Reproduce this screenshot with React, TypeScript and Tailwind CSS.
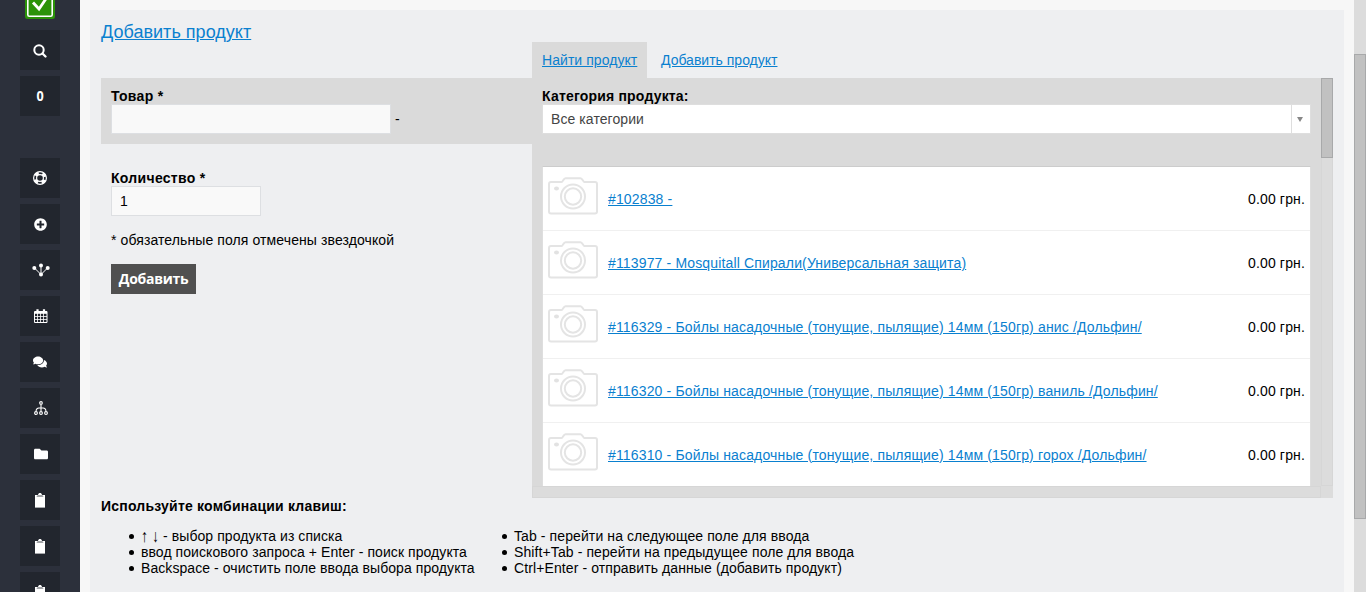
import type { ReactNode } from 'react';
import { FaPlusCircle, FaFolder, FaComments } from 'react-icons/fa';

const products = [
  '#102838 -',
  '#113977 - Mosquitall Спирали(Универсальная защита)',
  '#116329 - Бойлы насадочные (тонущие, пылящие) 14мм (150гр) анис /Дольфин/',
  '#116320 - Бойлы насадочные (тонущие, пылящие) 14мм (150гр) ваниль /Дольфин/',
  '#116310 - Бойлы насадочные (тонущие, пылящие) 14мм (150гр) горох /Дольфин/',
];

function Search() {
  return (
    <svg width="14" height="14" viewBox="0 0 14 14" fill="none" stroke="currentColor" strokeWidth="2">
      <circle cx="6" cy="6" r="4.7" />
      <path d="M9.5 9.5l3 3" strokeLinecap="round" strokeWidth="2.3" />
    </svg>
  );
}

function LifeRing() {
  return (
    <svg width="14" height="14" viewBox="0 0 14 14" fill="none" stroke="currentColor">
      <circle cx="7" cy="7" r="6.4" strokeWidth="1.2" />
      <circle cx="7" cy="7" r="3.4" strokeWidth="1.2" />
      <circle cx="7" cy="7" r="5" strokeWidth="3" strokeDasharray="3.93 3.93" strokeDashoffset="-1.96" />
    </svg>
  );
}

function Hub() {
  return (
    <svg width="18" height="14" viewBox="0 0 18 14" fill="currentColor" stroke="currentColor">
      <path d="M9 11.5V2.5M9 11.5L2.5 5M9 11.5L15.5 5" />
      <g stroke="none">
        <circle cx="9" cy="2.5" r="2" />
        <circle cx="2.3" cy="4.9" r="2" />
        <circle cx="15.7" cy="4.9" r="2" />
        <circle cx="9" cy="11.5" r="2" />
      </g>
    </svg>
  );
}

function Calendar() {
  return (
    <svg width="14" height="14" viewBox="0 0 14 14" fill="none" stroke="currentColor">
      <path d="M.5 2.5h12.5v11H.5zM.5 3.5h12.5" />
      <path d="M3.5 4v9.5M6.5 4v9.5M9.5 4v9.5M.5 7.5h12.5M.5 10.5h12.5M.5 4.5h12.5" strokeWidth=".8" />
      <path d="M3.5 .3v3.2M10 .3v3.2" strokeWidth="2.2" />
    </svg>
  );
}

function Tree() {
  return (
    <svg width="14" height="14" viewBox="0 0 14 14" fill="none" stroke="currentColor" strokeWidth="1.1">
      <circle cx="7" cy="1.9" r="1.3" />
      <path d="M7 3.3v7.3M2 10.6c0-3 1.6-3.9 5-3.9s5 .9 5 3.9" />
      <circle cx="2" cy="12" r="1.4" />
      <circle cx="7" cy="12" r="1.4" />
      <circle cx="12" cy="12" r="1.4" />
    </svg>
  );
}

function Clipboard() {
  return (
    <svg width="12" height="15" viewBox="0 0 12 15" fill="currentColor">
      <path d="M1 2h10v12.6H1z" />
      <path d="M2.6 4.1c0-1.9 1-2.1 2-2.2C4.7.7 5.2.2 6 .2s1.3.5 1.4 1.7c1 .1 2 .3 2 2.2z" fill="#a2a4a7" />
      <path d="M4 2.1C4.3.7 5 .1 6 .1s1.7.6 2 2z" />
    </svg>
  );
}

function Camera() {
  return (
    <svg width="50" height="38" viewBox="0 0 50 38" fill="none" stroke="#e4e4e4" strokeWidth="2" className="shrink-0">
      <path d="M3 5h10.5c1.5 0 2-3.8 4-3.8h15c2 0 2.5 3.8 4 3.8H47q2 0 2 2v27.5q0 2-2 2H3q-2 0-2-2V7q0-2 2-2z" />
      <circle cx="25" cy="19.5" r="12" />
      <circle cx="25" cy="19.5" r="8.2" />
      <ellipse cx="8.5" cy="11.5" rx="2.5" ry="2" fill="#e2e2e2" stroke="none" />
    </svg>
  );
}

function SideButton({ children }: { children: ReactNode }) {
  return (
    <div className="flex h-10 w-10 shrink-0 items-center justify-center bg-[#22262e] text-white">{children}</div>
  );
}

function Sidebar() {
  return (
    <aside className="flex h-full w-20 shrink-0 flex-col items-center gap-1.5 overflow-hidden bg-[#2c303b]">
      <svg width="30" height="19" viewBox="0 11 30 19" className="mb-[5px] shrink-0">
        <rect width="30" height="30" rx="2.5" fill="#2b9209" />
        <rect x="2.8" y="2.8" width="24.4" height="24.4" rx="1.5" fill="none" stroke="#fff" strokeWidth="1.6" />
        <path d="M8 13.5l6 6.5 7.5-11" fill="none" stroke="#fff" strokeWidth="2.8" />
      </svg>
      <SideButton><span className="pt-px"><Search /></span></SideButton>
      <SideButton><span className="scale-x-90 font-['Open_Sans',sans-serif] text-sm font-bold">0</span></SideButton>
      <div className="h-[30px] shrink-0" />
      <SideButton><LifeRing /></SideButton>
      <SideButton><FaPlusCircle size={13} /></SideButton>
      <SideButton><span className="pl-0.5"><Hub /></span></SideButton>
      <SideButton><span className="pl-px"><Calendar /></span></SideButton>
      <SideButton><FaComments size={14} /></SideButton>
      <SideButton><span className="pl-px"><Tree /></span></SideButton>
      <SideButton><span className="pl-px"><FaFolder size={14} /></span></SideButton>
      <SideButton><Clipboard /></SideButton>
      <SideButton><Clipboard /></SideButton>
      <SideButton><Clipboard /></SideButton>
    </aside>
  );
}

function Hint({ children }: { children: ReactNode }) {
  return (
    <li className="flex h-4 items-center whitespace-nowrap">
      <span className="mr-[7px] h-[5px] w-[5px] shrink-0 rounded-full bg-black" />
      <span>{children}</span>
    </li>
  );
}

export default function App() {
  const link = 'text-[#0a80cf] underline';
  return (
    <div className="flex h-[592px] w-[1366px] overflow-hidden bg-[#f7f7f7] font-['Liberation_Sans',Arial,sans-serif] text-sm leading-4 text-black">
      <Sidebar />
      <main className="ml-2.5 mt-2.5 mr-2.5 flex w-[1254px] shrink-0 flex-col bg-[#eeeff1] pl-[11px] pr-[11px]">
        <h1 className="h-8 pt-3 text-lg leading-[21px] tracking-[0.03px]">
          <a href="#" className={link}>Добавить продукт</a>
        </h1>
        <div className="flex h-[456px]">
          <section className="w-[431px] shrink-0 pt-9">
            <div className="h-[66px] bg-[#dadada] pt-2.5 pl-2.5">
              <label className="block font-bold tracking-[0.3px]">Товар *</label>
              <div className="flex items-center">
                <div className="h-[30px] w-[280px] border border-[#dddfe2] bg-[#f9f9f9]" />
                <span className="ml-1">-</span>
              </div>
            </div>
            <div className="pt-[26px] pl-2.5">
              <label className="block font-bold tracking-[0.3px]">Количество *</label>
              <div className="flex h-[30px] w-[150px] items-center border border-[#dddfe2] bg-[#f9f9f9] pl-2">1</div>
              <p className="mt-4 tracking-[0.1px]">* обязательные поля отмечены звездочкой</p>
              <button className="mt-4 block h-[30px] w-[85px] bg-[#505050] font-['Open_Sans',sans-serif] font-bold tracking-[-0.3px] text-white">Добавить</button>
            </div>
          </section>
          <section className="w-[801px] shrink-0">
            <nav className="flex h-9">
              <div className="w-[115px] bg-[#dadada] pt-2.5 pl-2.5"><a href="#" className={`tracking-[0.06px] ${link}`}>Найти продукт</a></div>
              <div className="pt-2.5 pl-3.5"><a href="#" className={link}>Добавить продукт</a></div>
            </nav>
            <div className="flex h-[408px] bg-[#dadada]">
              <div className="w-[789px] pt-2.5 pl-2.5">
                <label className="block font-bold tracking-[0.19px]">Категория продукта:</label>
                <div className="flex h-[30px] w-[769px] border border-[#dedede] bg-white text-[#444]">
                  <span className="flex-1 pt-1.5 pl-2 tracking-[0.08px]">Все категории</span>
                  <span className="flex w-[19px] items-center border-l border-[#dedede] pl-[5px]">
                    <svg width="6" height="5" viewBox="0 0 6 5"><path d="M0 0h6L3 5z" fill="#888" /></svg>
                  </span>
                </div>
                <div className="mt-8 w-[769px] border border-b-0 border-[#dedede] border-t-[#cccccc] bg-white">
                  {products.map((name) => (
                    <div key={name} className="flex h-16 items-center border-b border-[#f0f0f0] pl-[5px] pr-[5px] tracking-[0.15px] last:border-transparent">
                      <span className="mb-[6px]"><Camera /></span>
                      <a href="#" className={`ml-2.5 ${link}`}>{name}</a>
                      <span className="ml-auto">0.00 грн.</span>
                    </div>
                  ))}
                </div>
              </div>
              <div className="w-3 border border-[#d6d6d6] bg-[#dcdcdc]">
                <div className="-mx-px -mt-px h-20 border border-[#a8a9aa] bg-[#c1c1c1]" />
              </div>
            </div>
            <div className="flex h-3 bg-[#dcdcdc]">
              <div className="w-[789px] border border-[#d6d6d6]" />
            </div>
          </section>
        </div>
        <h2 className="font-bold tracking-[0.21px]">Используйте комбинации клавиш:</h2>
        <div className="mt-3.5 flex tracking-[0.07px]">
          <ul className="w-[373px] pl-7">
            <Hint>
              <span className="inline-block scale-y-125">↑</span> <span className="inline-block scale-y-125">↓</span> - выбор продукта из списка
            </Hint>
            <Hint>ввод поискового запроса + Enter - поиск продукта</Hint>
            <Hint>Backspace - очистить поле ввода выбора продукта</Hint>
          </ul>
          <ul className="pl-7 tracking-[0.1px]">
            <Hint>Tab - перейти на следующее поле для ввода</Hint>
            <Hint>Shift+Tab - перейти на предыдущее поле для ввода</Hint>
            <Hint>Ctrl+Enter - отправить данные (добавить продукт)</Hint>
          </ul>
        </div>
      </main>
      <div className="w-3 shrink-0 bg-[#dcdcdc] pt-[54px]">
        <div className="h-[465px] border border-[#a8a9aa] bg-[#c1c1c1]" />
      </div>
    </div>
  );
}
